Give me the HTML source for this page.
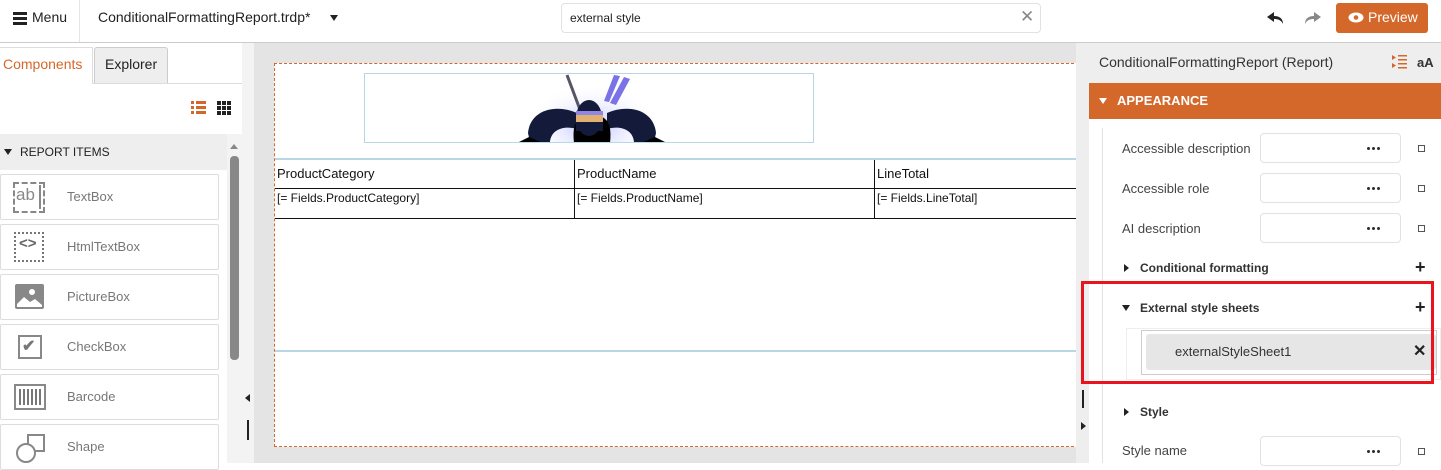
<!DOCTYPE html>
<html><head><style>
*{box-sizing:border-box;margin:0;padding:0}
body{width:1441px;height:463px;overflow:hidden;font-family:"Liberation Sans",Arial,sans-serif;background:#fff;position:relative;color:#333}
.a{position:absolute}
.t{font-size:13px;white-space:nowrap}
.item{position:absolute;left:0;width:219px;height:46px;border:1px solid #ddd;border-radius:2px;background:#fff}
.item span{position:absolute;left:66px;top:14px;font-size:13px;color:#777}
.inp{position:absolute;left:1260px;width:141px;height:30px;border:1px solid #e2e2e2;border-radius:4px;background:#fff}
.inp b{position:absolute;right:20px;top:13px;width:14px;height:3px;background:radial-gradient(circle,#333 1.4px,transparent 1.6px) 0 0/5px 3px repeat-x}
.sq{position:absolute;left:1418px;width:7px;height:7px;border:1px solid #555}
.lbl{position:absolute;left:1122px;font-size:13px;color:#444}
</style></head><body>
<!-- top bar -->
<div class="a" style="left:0;top:0;width:1441px;height:43px;border-bottom:1px solid #ccc;background:#fff"></div>
<div class="a" style="left:13px;top:12px;width:14px;height:3px;background:#222;box-shadow:0 5px 0 #222,0 10px 0 #222"></div>
<div class="a t" style="left:32px;top:9px;font-size:14px;color:#222">Menu</div>
<div class="a" style="left:79px;top:0;width:1px;height:42px;background:#e4e4e4"></div>
<div class="a t" style="left:98px;top:9px;font-size:14px;color:#222">ConditionalFormattingReport.trdp*</div>
<div class="a" style="left:330px;top:15px;border-left:4px solid transparent;border-right:4px solid transparent;border-top:6px solid #222"></div>
<div class="a" style="left:561px;top:3px;width:480px;height:30px;border:1px solid #e2e2e2;border-radius:4px"></div>
<div class="a t" style="left:570px;top:11px;font-size:12px;color:#222">external style</div>
<div class="a t" style="left:1020px;top:7px;font-size:17px;color:#888">✕</div>
<svg class="a" style="left:1266px;top:10px" width="18" height="16" viewBox="0 0 18 16"><path d="M8 2L1 7l7 5V9c4 0 7 1 9 5 0-5-3-8-9-8z" fill="#222"/></svg>
<svg class="a" style="left:1304px;top:10px" width="18" height="16" viewBox="0 0 18 16"><path d="M10 2l7 5-7 5V9c-4 0-7 1-9 5 0-5 3-8 9-8z" fill="#888"/></svg>
<div class="a" style="left:1336px;top:3px;width:92px;height:30px;background:#d4682a;border-radius:3px"></div>
<svg class="a" style="left:1348px;top:12px" width="16" height="11" viewBox="0 0 16 11"><ellipse cx="8" cy="5.5" rx="7.5" ry="5" fill="#fff"/><circle cx="8" cy="5.5" r="2.3" fill="#d4682a"/></svg>
<div class="a t" style="left:1368px;top:9px;font-size:14px;color:#fff">Preview</div>

<!-- left panel -->
<div class="a" style="left:0;top:83px;width:242px;height:1px;background:#ddd"></div>
<div class="a" style="left:0;top:47px;width:93px;height:37px;background:#fff;border:1px solid #ddd;border-bottom:none;border-left:none"></div>
<div class="a t" style="left:3px;top:56px;font-size:14px;color:#d4682a">Components</div>
<div class="a" style="left:94px;top:47px;width:74px;height:36px;background:#eee;border:1px solid #ccc;border-bottom:none;border-radius:3px 3px 0 0"></div>
<div class="a t" style="left:105px;top:56px;font-size:14px;color:#222">Explorer</div>
<svg class="a" style="left:191px;top:101px" width="15" height="13"><rect x="0" y="0" width="3" height="3" fill="#d4682a"/><rect x="5" y="0" width="10" height="3" fill="#d4682a"/><rect x="0" y="5" width="3" height="3" fill="#d4682a"/><rect x="5" y="5" width="10" height="3" fill="#d4682a"/><rect x="0" y="10" width="3" height="3" fill="#d4682a"/><rect x="5" y="10" width="10" height="3" fill="#d4682a"/></svg>
<svg class="a" style="left:217px;top:101px" width="14" height="14"><g fill="#222"><rect x="0" y="0" width="4" height="4"/><rect x="5" y="0" width="4" height="4"/><rect x="10" y="0" width="4" height="4"/><rect x="0" y="5" width="4" height="4"/><rect x="5" y="5" width="4" height="4"/><rect x="10" y="5" width="4" height="4"/><rect x="0" y="10" width="4" height="4"/><rect x="5" y="10" width="4" height="4"/><rect x="10" y="10" width="4" height="4"/></g></svg>
<div class="a" style="left:0;top:134px;width:227px;height:36px;background:#eee"></div>
<div class="a" style="left:4px;top:149px;border-left:4px solid transparent;border-right:4px solid transparent;border-top:6px solid #222"></div>
<div class="a t" style="left:20px;top:145px;font-size:12px;color:#222">REPORT ITEMS</div>
<div class="a" style="left:227px;top:134px;width:15px;height:329px;background:#f3f3f3"></div>
<div class="a" style="left:230px;top:144px;border-left:4px solid transparent;border-right:4px solid transparent;border-bottom:5px solid #888"></div>
<div class="a" style="left:230px;top:156px;width:9px;height:204px;background:#888;border-radius:4px"></div>

<div class="item" style="top:174px"><div class="a" style="left:12px;top:7px;width:32px;height:31px;border:2px dashed #888"></div><div class="a" style="left:15px;top:10px;font-size:17px;color:#888">ab</div><div class="a" style="left:38px;top:10px;width:2px;height:24px;background:#888"></div><span>TextBox</span></div>
<div class="item" style="top:224px"><div class="a" style="left:13px;top:7px;width:30px;height:30px;border:2px dotted #777"></div><div class="a" style="left:18px;top:10px;font-size:15px;color:#666;font-weight:bold">&lt;&gt;</div><span>HtmlTextBox</span></div>
<div class="item" style="top:274px"><svg class="a" style="left:14px;top:9px" width="29" height="25"><rect width="29" height="25" rx="2" fill="#888"/><path d="M2 20l7-7 6 5 5-3 7 6v2H2z" fill="#fff"/><circle cx="17" cy="8" r="3" fill="#fff"/></svg><span>PictureBox</span></div>
<div class="item" style="top:324px"><div class="a" style="left:17px;top:10px;width:24px;height:24px;border:2px solid #888"></div><div class="a" style="left:21px;top:11px;font-size:16px;color:#777;font-weight:bold">✔</div><span>CheckBox</span></div>
<div class="item" style="top:374px"><div class="a" style="left:13px;top:9px;width:32px;height:26px;border:2px solid #888"></div><div class="a" style="left:18px;top:14px;width:22px;height:16px;background:repeating-linear-gradient(90deg,#777 0 2px,#fff 2px 4px)"></div><span>Barcode</span></div>
<div class="item" style="top:424px"><div class="a" style="left:26px;top:9px;width:18px;height:18px;border:2px solid #888"></div><div class="a" style="left:15px;top:18px;width:20px;height:20px;border:2px solid #888;border-radius:50%;background:#fff"></div><span>Shape</span></div>

<!-- canvas -->
<div class="a" style="left:242px;top:43px;width:12px;height:420px;background:#f3f3f3"></div>
<div class="a" style="left:245px;top:394px;border-top:4px solid transparent;border-bottom:4px solid transparent;border-right:5px solid #222"></div>
<div class="a" style="left:247px;top:420px;width:2px;height:20px;background:#222"></div>
<div class="a" style="left:254px;top:43px;width:822px;height:420px;background:#e4e4e4"></div>
<div class="a" style="left:274px;top:63px;width:810px;height:384px;background:#fff;border:1px dashed #d4682a"></div>
<div class="a" style="left:364px;top:73px;width:450px;height:70px;border:1px solid #b8d6e4;overflow:hidden">
<svg width="450" height="70" viewBox="0 0 450 70" style="position:absolute;left:-1px;top:-1px"><defs><radialGradient id="g" cx="0.5" cy="0.6" r="0.5"><stop offset="0" stop-color="#b8bfff"/><stop offset="1" stop-color="#fff" stop-opacity="0"/></radialGradient></defs>
<ellipse cx="228" cy="45" rx="70" ry="42" fill="url(#g)"/>
<path d="M240 28l10-26 6 1-11 26zM246 30l14-26 6 2-14 26z" fill="#7a72e6"/>
<path d="M203 2l15 40" stroke="#556" stroke-width="3"/>
<path d="M213 40C190 30 166 38 164 60L166 69H186C187 57 199 52 213 56Z" fill="#141a3a"/>
<path d="M243 40C266 30 290 38 292 60L290 69H270C269 57 257 52 243 56Z" fill="#141a3a"/>
<path d="M153 70l12-6 14 6zM303 70l-12-6-14 6z" fill="#000"/>
<path d="M210 70c-2-18 2-28 18-28s20 10 18 28z" fill="#000"/>
<ellipse cx="225" cy="45" rx="13" ry="18" fill="#141a3a"/>
<rect x="212" y="42" width="27" height="7" fill="#e2b071"/>
<rect x="212" y="38" width="27" height="4" fill="#8f86e6"/>
<rect x="212" y="49" width="27" height="9" fill="#141a3a"/>
</svg></div>
<div class="a" style="left:275px;top:158px;width:801px;height:2px;background:#b8d6e4"></div>
<div class="a" style="left:275px;top:188px;width:801px;height:1px;background:#111"></div>
<div class="a" style="left:275px;top:218px;width:801px;height:1px;background:#111"></div>
<div class="a" style="left:574px;top:160px;width:1px;height:58px;background:#111"></div>
<div class="a" style="left:874px;top:160px;width:1px;height:58px;background:#111"></div>
<div class="a t" style="left:277px;top:166px;color:#111">ProductCategory</div>
<div class="a t" style="left:577px;top:166px;color:#111">ProductName</div>
<div class="a t" style="left:877px;top:166px;color:#111">LineTotal</div>
<div class="a t" style="left:277px;top:191px;font-size:12px;color:#111">[= Fields.ProductCategory]</div>
<div class="a t" style="left:577px;top:191px;font-size:12px;color:#111">[= Fields.ProductName]</div>
<div class="a t" style="left:877px;top:191px;font-size:12px;color:#111">[= Fields.LineTotal]</div>
<div class="a" style="left:275px;top:350px;width:801px;height:2px;background:#b8d6e4"></div>

<!-- right panel -->
<div class="a" style="left:1076px;top:43px;width:365px;height:420px;background:#eee"></div>
<div class="a" style="left:1089px;top:118px;width:352px;height:345px;background:#fff"></div>
<div class="a" style="left:1102px;top:128px;width:1px;height:335px;background:#e2e2e2"></div>
<div class="a" style="left:1082px;top:390px;width:2px;height:18px;background:#222"></div>
<div class="a" style="left:1081px;top:422px;border-top:4px solid transparent;border-bottom:4px solid transparent;border-left:5px solid #222"></div>
<div class="a t" style="left:1099px;top:54px;font-size:14px;color:#333">ConditionalFormattingReport (Report)</div>
<svg class="a" style="left:1392px;top:55px" width="15" height="14"><path d="M0 0l4 2.5L0 5zM0 8l4 2.5L0 13z" fill="#d4682a"/><rect x="6" y="0" width="9" height="1.5" fill="#d4682a"/><rect x="6" y="4" width="9" height="1.5" fill="#d4682a"/><rect x="6" y="8" width="9" height="1.5" fill="#d4682a"/><rect x="6" y="12" width="9" height="1.5" fill="#d4682a"/></svg>
<div class="a t" style="left:1417px;top:55px;font-size:13px;font-weight:bold;color:#333">aA</div>
<div class="a" style="left:1089px;top:83px;width:352px;height:36px;background:#d4682a"></div>
<div class="a" style="left:1099px;top:98px;border-left:4px solid transparent;border-right:4px solid transparent;border-top:6px solid #fff"></div>
<div class="a t" style="left:1117px;top:93px;font-size:13px;font-weight:bold;color:#fff">APPEARANCE</div>

<div class="lbl" style="top:141px">Accessible description</div>
<div class="inp" style="top:133px"><b></b></div><div class="sq" style="top:145px"></div>
<div class="lbl" style="top:181px">Accessible role</div>
<div class="inp" style="top:173px"><b></b></div><div class="sq" style="top:185px"></div>
<div class="lbl" style="top:221px">AI description</div>
<div class="inp" style="top:213px"><b></b></div><div class="sq" style="top:225px"></div>
<div class="a" style="left:1124px;top:264px;border-top:4px solid transparent;border-bottom:4px solid transparent;border-left:5px solid #222"></div>
<div class="a t" style="left:1140px;top:261px;font-size:12px;font-weight:bold;color:#333">Conditional formatting</div>
<div class="a t" style="left:1415px;top:257px;font-size:18px;font-weight:bold;color:#222">+</div>
<div class="a" style="left:1122px;top:305px;border-left:4px solid transparent;border-right:4px solid transparent;border-top:6px solid #222"></div>
<div class="a t" style="left:1140px;top:301px;font-size:12px;font-weight:bold;color:#333">External style sheets</div>
<div class="a t" style="left:1415px;top:297px;font-size:18px;font-weight:bold;color:#222">+</div>
<div class="a" style="left:1126px;top:328px;width:315px;height:52px;border:1px solid #eee"></div>
<div class="a" style="left:1141px;top:330px;width:296px;height:45px;border:1px solid #ccc"></div>
<div class="a" style="left:1146px;top:334px;width:290px;height:36px;background:#e6e6e6;border-radius:3px"></div>
<div class="a t" style="left:1175px;top:344px;font-size:13px;color:#333">externalStyleSheet1</div>
<div class="a t" style="left:1413px;top:341px;font-size:16px;font-weight:bold;color:#222">✕</div>
<div class="a" style="left:1081px;top:281px;width:353px;height:103px;border:3px solid #e8141e"></div>
<div class="a" style="left:1124px;top:408px;border-top:4px solid transparent;border-bottom:4px solid transparent;border-left:5px solid #222"></div>
<div class="a t" style="left:1140px;top:405px;font-size:12px;font-weight:bold;color:#333">Style</div>
<div class="lbl" style="top:443px;left:1122px">Style name</div>
<div class="inp" style="top:436px"><b></b></div><div class="sq" style="top:448px"></div>
</body></html>
